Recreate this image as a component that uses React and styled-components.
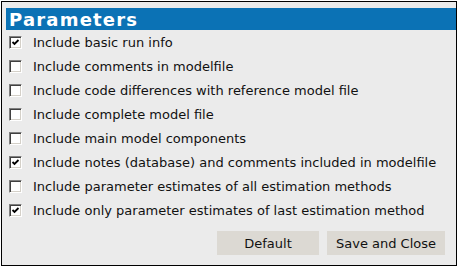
import React from "react";
import styled, { createGlobalStyle } from "styled-components";

const options = [
  { label: "Include basic run info", checked: true },
  { label: "Include comments in modelfile", checked: false },
  { label: "Include code differences with reference model file", checked: false },
  { label: "Include complete model file", checked: false },
  { label: "Include main model components", checked: false },
  { label: "Include notes (database) and comments included in modelfile", checked: true },
  { label: "Include parameter estimates of all estimation methods", checked: false },
  { label: "Include only parameter estimates of last estimation method", checked: true },
];

function Check({ checked }) {
  return (
    <Box>
      {checked && (
        <svg width="9" height="9" viewBox="0 0 9 9">
          <path d="M1.5 4 L3.5 6 L7.5 2" fill="none" stroke="#000" strokeWidth="1.8" />
        </svg>
      )}
    </Box>
  );
}

export default function App() {
  return (
    <>
      <Global />
      <Frame>
        <Header>Parameters</Header>
        <List>
          {options.map((o) => (
            <Row key={o.label}>
              <Check checked={o.checked} />
              <Label>{o.label}</Label>
            </Row>
          ))}
        </List>
        <Actions>
          <Button $w={102}>Default</Button>
          <Button $w={118}>Save and Close</Button>
        </Actions>
      </Frame>
    </>
  );
}

const Global = createGlobalStyle`
  body {
    margin: 0;
    background: #fff;
    font-family: "DejaVu Sans", Verdana, sans-serif;
  }
`;

const Frame = styled.div`
  box-sizing: border-box;
  margin: 1px 0 0 1px;
  width: 456px;
  height: 265px;
  border: 1px solid #000;
  background: #ebebeb;
  padding: 6px 0 0 4px;
  display: flex;
  flex-direction: column;
`;

const Header = styled.div`
  height: 22px;
  background: #0b72b5;
  color: #fff;
  font-weight: bold;
  font-size: 18px;
  letter-spacing: 1.2px;
  line-height: 23px;
  padding-left: 3px;
`;

const List = styled.div`
  display: flex;
  flex-direction: column;
`;

const Row = styled.div`
  height: 24px;
  display: flex;
  align-items: center;
  padding-left: 3px;
  gap: 11px;
`;

const Box = styled.span`
  box-sizing: border-box;
  width: 13px;
  height: 13px;
  background: #fff;
  border-top: 1px solid #808080;
  border-left: 1px solid #808080;
  border-right: 1px solid #fff;
  border-bottom: 1px solid #fff;
  box-shadow: inset 1px 1px 0 #404040, inset -1px -1px 0 #d4d0c8;
  display: flex;
  align-items: center;
  justify-content: center;
  flex: none;
`;

const Label = styled.span`
  font-size: 13px;
  color: #111;
  white-space: nowrap;
`;

const Actions = styled.div`
  display: flex;
  justify-content: flex-end;
  gap: 8px;
  margin-top: 9px;
  padding-right: 11px;
`;

const Button = styled.button`
  width: ${(p) => p.$w}px;
  height: 24px;
  border: none;
  background: #dcd9d3;
  font-family: "DejaVu Sans", Verdana, sans-serif;
  font-size: 13px;
  color: #111;
  padding: 0;
`;
